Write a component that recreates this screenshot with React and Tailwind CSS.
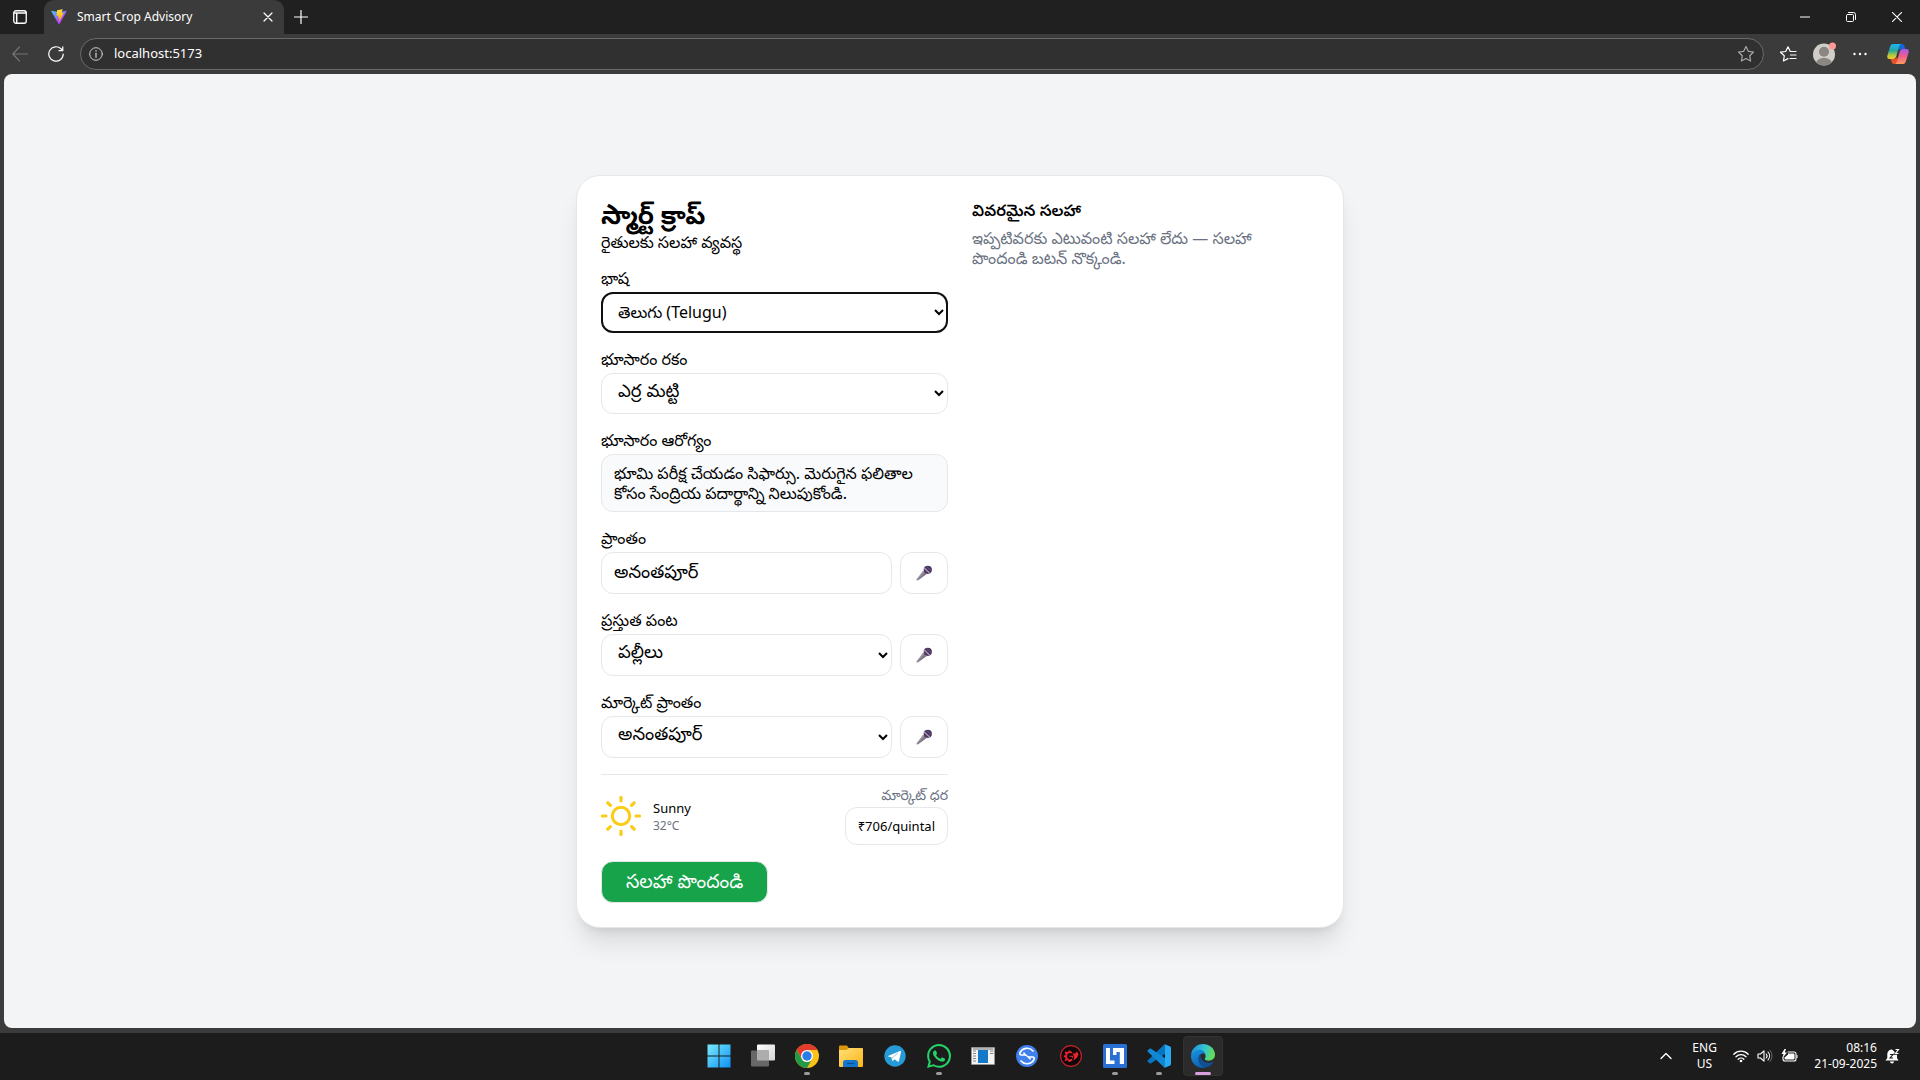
import React from "react";

const stroke = {
  fill: "none",
  stroke: "currentColor",
  strokeLinecap: "round",
  strokeLinejoin: "round",
};

/* ---------- Browser chrome ---------- */

function ViteLogo() {
  return (
    <svg viewBox="0 0 410 404" className="h-4 w-4 shrink-0" aria-hidden="true">
      <defs>
        <linearGradient id="viteA" x1="6" y1="33" x2="235" y2="344" gradientUnits="userSpaceOnUse">
          <stop stopColor="#41D1FF" />
          <stop offset="1" stopColor="#BD34FE" />
        </linearGradient>
        <linearGradient id="viteB" x1="194" y1="9" x2="236" y2="293" gradientUnits="userSpaceOnUse">
          <stop stopColor="#FFEA83" />
          <stop offset=".08" stopColor="#FFDD35" />
          <stop offset="1" stopColor="#FFA800" />
        </linearGradient>
      </defs>
      <path fill="url(#viteA)" d="M399.641 59.525 215.643 388.545c-3.799 6.793-13.559 6.834-17.415.073L10.582 59.556C6.38 52.19 12.68 43.266 21.028 44.759l184.195 32.923c1.175.21 2.378.208 3.553-.006l180.343-32.87c8.32-1.517 14.649 7.337 10.522 14.719Z" />
      <path fill="url(#viteB)" d="M292.965 1.574 156.801 28.255a5 5 0 0 0-4.03 4.611l-8.376 141.464c-.197 3.332 2.863 5.918 6.115 5.168l37.91-8.749c3.547-.818 6.752 2.306 6.023 5.873l-11.263 55.153c-.758 3.712 2.727 6.886 6.352 5.785l23.415-7.114c3.63-1.102 7.118 2.081 6.35 5.796l-17.899 86.633c-1.12 5.419 6.088 8.374 9.094 3.728l2.008-3.103 110.954-221.428c1.858-3.707-1.346-7.935-5.418-7.15l-39.022 7.532c-3.667.707-6.787-2.708-5.752-6.296l25.469-88.291c1.036-3.594-2.095-7.012-5.766-6.293Z" />
    </svg>
  );
}

function CopilotLogo() {
  return (
    <svg viewBox="0 0 24 24" className="h-6 w-6" aria-hidden="true">
      <defs>
        <linearGradient id="copA" x1="0" y1="0" x2="0" y2="1">
          <stop stopColor="#1bb8f2" />
          <stop offset=".45" stopColor="#2aa69a" />
          <stop offset=".75" stopColor="#b4c93c" />
          <stop offset="1" stopColor="#f7c92c" />
        </linearGradient>
        <linearGradient id="copB" x1="0" y1="0" x2="0" y2="1">
          <stop stopColor="#a05cf0" />
          <stop offset=".45" stopColor="#ee5a8e" />
          <stop offset="1" stopColor="#ff9a5a" />
        </linearGradient>
      </defs>
      <path fill="#1565dd" d="M13 2h2.800c1.300 0 2.200.8 2.600 2.100L19.300 7H15c-1.300 0-2 .8-2.400 2L12 6Z" />
      <path fill="url(#copA)" d="M7 2h8c-1.200.5-1.700 1.600-2.100 3l-2.700 9.500C9.700 16 8.900 17 7.200 17H3.500C1.500 17 .9 15.600 1.400 13.600L4 5C4.600 3 5.400 2 7 2Z" />
      <path fill="#e8502a" d="M11 22H8.200c-1.300 0-2.200-.8-2.600-2.100L4.700 17H8c1.800 0 2.600-1 3-2.300L12 18Z" />
      <path fill="url(#copB)" d="M17 22H9c1.200-.5 1.700-1.600 2.100-3l2.700-9.500C14.300 8 15.100 7 16.800 7h3.700c2 0 2.600 1.400 2.100 3.400L20 19c-.6 2-1.400 3-3 3Z" />
    </svg>
  );
}

function TitleBar() {
  return (
    <div className="flex h-[34px] items-stretch bg-[#202020] text-white">
      <button aria-label="Tab actions" className="flex w-11 items-center justify-center pr-1">
        <svg viewBox="0 0 14 14" className="h-3.5 w-3.5" aria-hidden="true">
          <rect x=".75" y=".75" width="12.5" height="12.5" rx="2.200" {...stroke} strokeWidth="1.300" />
          <path d="M1 3h12M3.700 4v9" {...stroke} strokeWidth="1.500" />
        </svg>
      </button>
      <div className="flex w-[240px] items-center rounded-t-[10px] bg-[#3b3b3b] pr-1 pl-[7px]">
        <ViteLogo />
        <span className="ml-2.5 flex-1 text-xs">Smart Crop Advisory</span>
        <button aria-label="Close tab" className="flex h-6 w-6 items-center justify-center">
          <svg viewBox="0 0 10 10" className="h-2.5 w-2.5" aria-hidden="true">
            <path d="m1 1 8 8M9 1 1 9" {...stroke} strokeWidth="1.200" />
          </svg>
        </button>
      </div>
      <button aria-label="New tab" className="flex w-[34px] items-center justify-center">
        <svg viewBox="0 0 14 14" className="h-3.5 w-3.5" aria-hidden="true">
          <path d="M7 .5v13M.5 7h13" {...stroke} strokeWidth="1.200" />
        </svg>
      </button>
      <div className="ml-auto flex">
        <button aria-label="Minimize" className="flex w-[46px] items-center justify-center">
          <svg viewBox="0 0 10 10" className="h-2.5 w-2.5" aria-hidden="true">
            <path d="M0 5h10" stroke="currentColor" />
          </svg>
        </button>
        <button aria-label="Restore" className="flex w-[46px] items-center justify-center">
          <svg viewBox="0 0 10 10" className="h-2.5 w-2.5" aria-hidden="true">
            <rect x=".5" y="2.500" width="7" height="7" rx="1" {...stroke} />
            <path d="M2.500.5h5a2 2 0 0 1 2 2v5" {...stroke} />
          </svg>
        </button>
        <button aria-label="Close" className="flex w-[46px] items-center justify-center">
          <svg viewBox="0 0 10 10" className="h-2.5 w-2.5" aria-hidden="true">
            <path d="m.3.3 9.400 9.400M9.700.3.300 9.700" {...stroke} strokeWidth="1.100" />
          </svg>
        </button>
      </div>
    </div>
  );
}

function Toolbar() {
  return (
    <div className="flex h-10 items-center bg-[#3b3b3b] pr-2.5 pl-2 text-white">
      <button aria-label="Back" className="flex w-6 justify-center text-[#757575]">
        <svg viewBox="0 0 16 16" className="h-4 w-4" aria-hidden="true">
          <path d="M7.500 1 .8 8l6.700 7M1 8h14.500" {...stroke} strokeWidth="1.100" />
        </svg>
      </button>
      <button aria-label="Refresh" className="ml-3 flex w-6 justify-center">
        <svg viewBox="0 0 16 16" className="h-4 w-4" aria-hidden="true">
          <path d="M15.200 8A7.200 7.200 0 1 1 13 2.800L14.800 4.500M14.800.8v3.800H11" {...stroke} strokeWidth="1.200" />
        </svg>
      </button>
      <div className="ml-3 flex h-8 flex-1 items-center rounded-full border border-[#6a6a6a] bg-[#303030] pr-2 pl-2">
        <svg viewBox="0 0 14 14" className="h-3.5 w-3.5 shrink-0 text-[#d0d0d0]" aria-hidden="true">
          <circle cx="7" cy="7" r="6.300" {...stroke} />
          <path d="M7 6.300v4" {...stroke} strokeWidth="1.200" />
          <circle cx="7" cy="4" r=".8" fill="currentColor" />
        </svg>
        <input
          aria-label="Address"
          defaultValue="localhost:5173"
          className="ml-[11px] min-w-0 flex-1 bg-transparent text-[13px] text-white outline-none"
        />
        <button aria-label="Add to favorites" className="text-[#a8a8a8]">
          <svg viewBox="0 0 18 18" className="h-[18px] w-[18px]" aria-hidden="true">
            <path d="m9 1.500 2.300 4.800 5.200.7-3.800 3.700.9 5.300L9 13.500 4.400 16l.9-5.300L1.500 7l5.200-.7Z" {...stroke} strokeWidth="1.200" />
          </svg>
        </button>
      </div>
      <div className="ml-3 flex items-center">
        <button aria-label="Favorites" className="flex w-6 justify-center">
          <svg viewBox="0 0 18 18" className="h-[18px] w-[18px]" aria-hidden="true">
            <path d="M17 6.500h-5.700L9 1.800 6.700 6.500l-5.200.7 3.800 3.600-.9 5.200L9 13.600M11.500 10H17M11 13.500h6" {...stroke} strokeWidth="1.200" />
          </svg>
        </button>
        <button aria-label="Profile" className="ml-3 flex w-6 justify-center">
          <svg viewBox="0 0 24 24" className="h-6 w-6" aria-hidden="true">
            <clipPath id="avatar"><circle cx="12" cy="12.500" r="11" /></clipPath>
            <g clipPath="url(#avatar)">
              <path fill="#d1cdc9" d="M0 0h24v24H0z" />
              <circle cx="12" cy="9.800" r="5" fill="#8b8682" />
              <ellipse cx="12" cy="21.500" rx="8" ry="5.800" fill="#8b8682" />
            </g>
            <circle cx="20.500" cy="4" r="3.500" fill="#ff9a94" />
          </svg>
        </button>
        <button aria-label="Settings and more" className="ml-3 flex w-6 justify-center">
          <svg viewBox="0 0 16 16" className="h-4 w-4" aria-hidden="true" fill="currentColor">
            <circle cx="2.500" cy="8" r="1.200" /><circle cx="8" cy="8" r="1.200" /><circle cx="13.500" cy="8" r="1.200" />
          </svg>
        </button>
        <button aria-label="Copilot" className="ml-3.5"><CopilotLogo /></button>
      </div>
    </div>
  );
}

/* ---------- Advisory form ---------- */

const field = "w-full min-w-0 rounded-xl border border-gray-200 bg-white px-3 text-black";

function Field({ id, label, children }) {
  return (
    <div className="mb-4">
      <label htmlFor={id} className="block h-5 text-base leading-5">{label}</label>
      <div className="mt-1 flex gap-2">{children}</div>
    </div>
  );
}

function MicButton({ label }) {
  return (
    <button type="button" aria-label={label} className="flex h-[42px] w-12 shrink-0 items-center justify-center rounded-xl border border-gray-200">
      <svg viewBox="0 0 16 16" className="h-4 w-4" aria-hidden="true">
        <path fill="#9d94a3" d="m7.200 5.500 3.500 3.400L2 15.200.7 15.400.4 14.500Z" />
        <path fill="#6d6475" d="m8.300 7 2.400 1.900L2 15.200l-.9.100Z" opacity=".6" />
        <circle cx="11.800" cy="4.800" r="4.100" fill="#4a3560" />
        <path d="m8 2.800 5.800 5.500" stroke="#a99cb8" strokeWidth="1.300" />
        <path d="M10.500 1.500 15 5.500" stroke="#75628a" strokeWidth=".8" />
      </svg>
    </button>
  );
}

function SunIcon() {
  return (
    <svg viewBox="0 0 40 40" className="h-10 w-10 text-[#facc15]" aria-hidden="true">
      <circle cx="20" cy="20" r="8.700" {...stroke} strokeWidth="3" />
      <path d="M20 1.500v3.500M20 35v3.500M1.500 20H5M35 20h3.500M6.800 6.800l2.600 2.600M30.600 30.600l2.600 2.600M6.800 33.200l2.600-2.600M30.600 9.400l2.600-2.600" {...stroke} strokeWidth="3.200" />
    </svg>
  );
}

function AdvisoryCard() {
  return (
    <section className="grid w-full max-w-3xl grid-cols-2 gap-6 rounded-3xl border border-gray-200 bg-white p-6 text-black shadow-xl">
      <form onSubmit={(e) => e.preventDefault()}>
        <h1 className="h-8 text-[26px] leading-7 font-bold">స్మార్ట్ క్రాప్</h1>
        <p className="mb-4 h-5 text-base leading-5">రైతులకు సలహా వ్యవస్థ</p>

        <Field id="language" label="భాష">
          <select id="language" className={`${field} h-[41px] text-base outline-2 -outline-offset-2 outline-[#101010]`}>
            <option>తెలుగు (Telugu)</option>
          </select>
        </Field>

        <Field id="soil" label="భూసారం రకం">
          <select id="soil" className={`${field} h-[41px] font-['Noto_Sans_Telugu','Noto_Sans',sans-serif] text-lg`}>
            <option>ఎర్ర మట్టి</option>
          </select>
        </Field>

        <div className="mb-4">
          <h2 className="h-5 text-base leading-5">భూసారం ఆరోగ్యం</h2>
          <p className="mt-1 rounded-xl border border-gray-200 bg-gray-50 px-3 py-2 text-base leading-5">
            భూమి పరీక్ష చేయడం సిఫార్సు. మెరుగైన ఫలితాల కోసం సేంద్రియ పదార్థాన్ని నిలుపుకోండి.
          </p>
        </div>

        <Field id="region" label="ప్రాంతం">
          <input id="region" defaultValue="అనంతపూర్" className={`${field} h-[42px] text-lg`} />
          <MicButton label="ప్రాంతం" />
        </Field>

        <Field id="crop" label="ప్రస్తుత పంట">
          <select id="crop" className={`${field} h-[42px] font-['Noto_Sans_Telugu','Noto_Sans',sans-serif] text-lg`}>
            <option>పల్లీలు</option>
          </select>
          <MicButton label="ప్రస్తుత పంట" />
        </Field>

        <Field id="market" label="మార్కెట్ ప్రాంతం">
          <select id="market" className={`${field} h-[42px] font-['Noto_Sans_Telugu','Noto_Sans',sans-serif] text-lg`}>
            <option>అనంతపూర్</option>
          </select>
          <MicButton label="మార్కెట్ ప్రాంతం" />
        </Field>

        <div className="flex items-center justify-between border-t border-gray-200 pt-3">
          <div className="flex items-center gap-3">
            <SunIcon />
            <div>
              <p className="text-[13px] leading-5">Sunny</p>
              <p className="text-xs text-gray-500">32°C</p>
            </div>
          </div>
          <div className="text-right">
            <p className="h-5 text-sm leading-4 text-gray-500">మార్కెట్ ధర</p>
            <p className="rounded-xl border border-gray-200 px-3 py-2 text-[13px] leading-5">₹706/quintal</p>
          </div>
        </div>

        <button type="submit" className="mt-4 h-[42px] rounded-xl border border-gray-200 bg-[#16a34a] px-6 text-[19px] text-white">
          సలహా పొందండి
        </button>
      </form>

      <div>
        <h2 className="mb-2 h-5 text-base leading-5 font-semibold">వివరమైన సలహా</h2>
        <p className="pr-10 text-base leading-5 text-gray-500">
          ఇప్పటివరకు ఎటువంటి సలహా లేదు — సలహా పొందండి బటన్ నొక్కండి.
        </p>
      </div>
    </section>
  );
}

/* ---------- Taskbar ---------- */

const I = ({ children }) => (
  <svg viewBox="0 0 24 24" className="h-6 w-6" aria-hidden="true">{children}</svg>
);

const apps = [
  {
    name: "Start",
    icon: (
      <I>
        <linearGradient id="win" x1="0" y1="0" x2="24" y2="24" gradientUnits="userSpaceOnUse">
          <stop stopColor="#7cecfb" /><stop offset="1" stopColor="#0a90f5" />
        </linearGradient>
        <path fill="url(#win)" d="M.5.5h11v11H.5zM12.500.5h11v11h-11zM.5 12.500h11v11H.5zM12.500 12.500h11v11h-11z" />
      </I>
    ),
  },
  {
    name: "Task view",
    icon: (
      <I>
        <linearGradient id="tv" x1="0" y1="0" x2="1" y2="1"><stop stopColor="#fff" /><stop offset="1" stopColor="#d4d4d4" /></linearGradient>
        <rect x="6" y=".5" width="18" height="16" rx="1" fill="url(#tv)" />
        <rect x="0" y="6.500" width="18" height="16" rx="1" fill="#686868" />
        <path fill="#adadad" d="M6 6.500h11a1 1 0 0 1 1 1v9H6z" />
      </I>
    ),
  },
  {
    name: "Chrome",
    running: true,
    icon: (
      <I>
        <circle cx="12" cy="12" r="12" fill="#fbc116" />
        <path fill="#e33b2e" d="M1.600 6A12 12 0 0 1 22.400 6H12L6.800 15Z" />
        <path fill="#249a46" d="M1.600 6 6.800 15a6 6 0 0 0 10.400 0L12 24A12 12 0 0 1 1.600 6Z" />
        <circle cx="12" cy="12" r="6" fill="#fff" />
        <circle cx="12" cy="12" r="4.700" fill="#2a7de9" />
      </I>
    ),
  },
  {
    name: "File Explorer",
    icon: (
      <I>
        <linearGradient id="fe" x1="0" y1="0" x2="1" y2="1"><stop stopColor="#ffe07a" /><stop offset="1" stopColor="#fbb416" /></linearGradient>
        <path fill="#dc9708" d="M0 2.500A1 1 0 0 1 1 1.500h7l2 3v4H0Z" />
        <path fill="url(#fe)" d="M0 6h7.500l2.500-2h13a1 1 0 0 1 1 1v17a1 1 0 0 1-1 1H1a1 1 0 0 1-1-1Z" />
        <path fill="#1477cc" d="M4 23v-4.500A2.500 2.500 0 0 1 6.500 16h10a2.500 2.500 0 0 1 2.500 2.500V23Z" />
        <path stroke="#0b4f91" strokeWidth="1.200" d="M8 19.500h7.500" />
      </I>
    ),
  },
  {
    name: "Telegram",
    icon: (
      <I>
        <circle cx="12" cy="12" r="10.700" fill="#279bd8" />
        <path fill="#fff" d="m5 12 12-5c.8-.3 1.200.1 1 1l-2 9c-.2.9-.7 1-1.400.5l-3-2.200-1.500 1.500c-.4.4-.8.3-.9-.3l-.8-3.200-3-.9c-.6-.2-.6-.3 0-.4Z" />
        <path stroke="#9dcbe8" strokeWidth="1" d="m9 14 6-5" />
      </I>
    ),
  },
  {
    name: "WhatsApp",
    running: true,
    icon: (
      <I>
        <path fill="#25d366" d="M17.472 14.382c-.297-.149-1.758-.867-2.030-.967-.273-.099-.471-.148-.67.150-.197.297-.767.966-.940 1.164-.173.199-.347.223-.644.075-.297-.150-1.255-.463-2.390-1.475-.883-.788-1.480-1.761-1.653-2.059-.173-.297-.018-.458.130-.606.134-.133.298-.347.446-.520.149-.174.198-.298.298-.497.099-.198.050-.371-.025-.520-.075-.149-.669-1.612-.916-2.207-.242-.579-.487-.500-.669-.510-.173-.008-.371-.010-.570-.010-.198 0-.520.074-.792.372-.272.297-1.040 1.016-1.040 2.479 0 1.462 1.065 2.875 1.213 3.074.149.198 2.096 3.200 5.077 4.487.709.306 1.262.489 1.694.625.712.227 1.360.195 1.871.118.571-.085 1.758-.719 2.006-1.413.248-.694.248-1.289.173-1.413-.074-.124-.272-.198-.570-.347M12.050 21.785h-.004a9.870 9.870 0 0 1-5.031-1.378l-.361-.214-3.741.982.998-3.648-.235-.374a9.860 9.860 0 0 1-1.510-5.260C2.167 6.443 6.602 2.009 12.054 2.009a9.825 9.825 0 0 1 6.988 2.898 9.825 9.825 0 0 1 2.893 6.994c-.003 5.450-4.437 9.884-9.885 9.884M20.463 3.488A11.815 11.815 0 0 0 12.050 0C5.495 0 .160 5.335.157 11.892c0 2.096.547 4.142 1.588 5.945L.057 24l6.305-1.654a11.882 11.882 0 0 0 5.683 1.448h.005c6.554 0 11.890-5.335 11.893-11.893a11.821 11.821 0 0 0-3.480-8.413Z" />
      </I>
    ),
  },
  {
    name: "Document viewer",
    icon: (
      <I>
        <path fill="#f3f3f3" stroke="#9a9a9a" strokeWidth=".7" d="M.5 3.500h23v17H.5z" />
        <path fill="#e3e3e3" d="M1 4h22v2H1z" />
        <path fill="#1379c8" d="M7 6h10v13H7z" />
        <path stroke="#777" strokeWidth=".9" d="M2 7h3M2 9.500h3M2 12h3M2 14.500h3M2 17h3M19 7h3.500M19 9.500h3.500M2 5h20" />
      </I>
    ),
  },
  {
    name: "Share",
    icon: (
      <I>
        <circle cx="12" cy="12" r="11" fill="#3f80ec" />
        <path d="M18 7A7.800 7.800 0 0 0 5 8.700C4.500 10 5 11 6.500 11h4l-1.500-1.800M6 17A7.800 7.800 0 0 0 19 15.300C19.500 14 19 13 17.500 13h-4l1.500 1.800" {...stroke} stroke="#fff" strokeWidth="1.700" />
        <path d="m10.500 11 3 2" {...stroke} stroke="#fff" strokeWidth="1.500" />
      </I>
    ),
  },
  {
    name: "Gaming Center",
    icon: (
      <I>
        <circle cx="12" cy="12" r="10.400" fill="#100808" stroke="#c42128" strokeWidth="1.200" />
        <path d="M13 8.800a4 4 0 1 0 .3 6.700" fill="none" stroke="#ee242c" strokeWidth="1.700" />
        <path d="M10.500 6.500v2M10.500 16v2M4.800 12.300h2M6.200 8l1.500 1.500M6.200 16.600l1.500-1.500" stroke="#ee242c" strokeWidth="1.800" />
        <path fill="#ee242c" d="m13.500 9 2.300.8L18 7.500l1.500 3-1.300 3-3.700 3 .7-3.500Z" />
        <path d="M10.500 12.300h3v1.500" fill="none" stroke="#ee242c" strokeWidth="1.100" />
      </I>
    ),
  },
  {
    name: "LT",
    running: true,
    icon: (
      <I>
        <rect width="24" height="24" rx="1.500" fill="#2970d4" />
        <path fill="#fff" d="M3 4h4v12.500h4.500V20H3ZM12.500 4H21v16h-4.200V8h-4.300Z" />
        <path fill="#fff" d="M10 4h3.500v7H10Z" />
      </I>
    ),
  },
  {
    name: "Visual Studio Code",
    running: true,
    icon: (
      <I>
        <path fill="#0874bf" d="M17.500.3 23 2.900v3.500L4.200 19.300a1.300 1.300 0 0 1-1.700-.1L.8 17.700a1 1 0 0 1 0-1.500Z" />
        <path fill="#1088d6" d="M17.500 23.700 23 21.100v-3.500L4.200 4.700a1.300 1.300 0 0 0-1.700.1L.8 6.300a1 1 0 0 0 0 1.500Z" />
        <path fill="#27aaf0" d="M17.500 23.800c.8-.6.500-1.300.5-2V2.300c0-.8.2-1.500-.5-2.100L23.200 2.600a1.300 1.300 0 0 1 .8 1.300v16.200c0 .6-.3 1.100-.8 1.300Z" />
      </I>
    ),
  },
  {
    name: "Microsoft Edge",
    active: true,
    icon: (
      <I>
        <defs>
          <linearGradient id="edA" x1="1" y1="5" x2="23" y2="12" gradientUnits="userSpaceOnUse">
            <stop stopColor="#2195dc" /><stop offset=".5" stopColor="#31c5d4" /><stop offset="1" stopColor="#69df4c" />
          </linearGradient>
          <linearGradient id="edB" x1="0" y1="7" x2="10" y2="24" gradientUnits="userSpaceOnUse">
            <stop stopColor="#1a94e0" /><stop offset="1" stopColor="#0b5cae" />
          </linearGradient>
        </defs>
        <path fill="url(#edA)" d="M0 11C.7 4.700 5.600 0 12 0c7 0 12 5.200 12 10.600 0 4-3 6.200-6.300 6.200-2.600 0-4-.9-4-1.700 0-.6.900-1 .9-3 0-2.600-2.500-4.600-5.800-4.600C4.500 7.500 1 9 0 11Z" />
        <path fill="url(#edB)" d="M0 12c.3-3.500 3.700-6.500 8-6.500 3.600 0 6.600 2.500 6.600 5.500-.8-1.200-2-1.600-3.200-1.400C9 10 7.600 12.300 7.600 15c0 4 3.500 7.700 7.600 8.500-1 .4-2 .5-3.200.5C5.200 24 0 18.700 0 12Z" />
        <path fill="#104f91" d="M11.400 9.600C9 10 7.600 12.300 7.600 15c0 5 4.500 8.900 8.900 8.100 2.500-.7 4.500-2.400 5.700-4.600.2-.5-.2-.8-.6-.6-1.100.6-2.300.8-3.600.8-5 0-8.600-3.700-8.400-6.500.1-1.100.7-2.100 1.800-2.600Z" />
      </I>
    ),
  },
];

function TaskButton({ app }) {
  return (
    <button
      aria-label={app.name}
      className={
        app.active
          ? "relative flex h-10 w-10 items-center justify-center rounded border border-[#333] bg-[#2b2b2b]"
          : "relative flex h-10 w-10 items-center justify-center"
      }
    >
      {app.icon}
      {app.running && <span className="absolute bottom-px h-[3px] w-1.5 rounded-full bg-[#9a9a9a]" />}
      {app.active && <span className="absolute bottom-0 h-[3px] w-4 rounded-full bg-[#d9a0df]" />}
    </button>
  );
}

function Taskbar() {
  return (
    <footer className="grid h-[47px] grid-cols-[1fr_auto_1fr] items-center bg-[#1c1c1c] pb-px text-white">
      <nav aria-label="Taskbar" className="col-start-2 flex gap-1 pl-px">
        {apps.map((app) => <TaskButton key={app.name} app={app} />)}
      </nav>
      <div className="flex items-center justify-end pr-5 text-xs leading-4">
        <button aria-label="Show hidden icons">
          <svg viewBox="0 0 12 12" className="h-3 w-3" aria-hidden="true">
            <path d="m1 8.500 5-5 5 5" {...stroke} strokeWidth="1.400" />
          </svg>
        </button>
        <button className="ml-5 w-6 text-center">ENG<br />US</button>
        <button aria-label="Network, volume and battery" className="ml-[17px] flex items-center gap-2">
          <svg viewBox="0 0 16 14" className="h-3.5 w-4" aria-hidden="true">
            <path d="M.8 5.200a10 10 0 0 1 14.400 0M3 7.700a7 7 0 0 1 10 0M5.200 10.200a4 4 0 0 1 5.600 0" {...stroke} strokeWidth="1.300" />
            <circle cx="8" cy="12" r="1.300" fill="currentColor" />
          </svg>
          <svg viewBox="0 0 16 14" className="h-3.5 w-4" aria-hidden="true">
            <path d="M1 5h2.500L7 1.800v10.400L3.500 9H1ZM9.200 5a3 3 0 0 1 0 4M11 3a6 6 0 0 1 0 8" {...stroke} strokeWidth="1.100" />
            <path d="M13 1.300a8.500 8.500 0 0 1 0 11.400" {...stroke} stroke="#666" />
          </svg>
          <svg viewBox="0 0 17 14" className="h-3.5 w-[17px]" aria-hidden="true">
            <path d="M7 3h6a2 2 0 0 1 2 2v5a2 2 0 0 1-2 2H4a2 2 0 0 1-2-2V8" {...stroke} strokeWidth="1.100" />
            <path fill="currentColor" d="M7 4.500h5.500a1 1 0 0 1 1 1v4a1 1 0 0 1-1 1H4.500a1 1 0 0 1-1-1V8.500L7 5.500ZM15.500 6h1v3h-1ZM3.500 0 .5 5h2L1.500 9 6 3.500H3.800L5 0Z" />
          </svg>
        </button>
        <button className="ml-4 text-right">08:16<br />21-09-2025</button>
        <button aria-label="Notifications" className="ml-2">
          <svg viewBox="0 0 15 16" className="h-4 w-[15px]" aria-hidden="true">
            <path fill="currentColor" d="M7 1.500c-3 0-4.700 2.200-4.700 5V10L.5 12.500h13L12 10V6ZM5 13.500h4a2 2 0 0 1-4 0Z" />
            <path d="M5 6.500h3l-3 3.500h3" fill="none" stroke="#1c1c1c" strokeWidth="1.100" />
            <path d="M10.500 1.500h3l-3 4h3" fill="none" stroke="#1c1c1c" strokeWidth="2.600" />
            <path d="M10.500 1.500h3l-3 4h3" fill="none" stroke="currentColor" strokeWidth="1.200" />
          </svg>
        </button>
      </div>
    </footer>
  );
}

export default function App() {
  return (
    <div className="flex min-h-screen flex-col bg-[#3b3b3b] font-['Segoe_UI','Noto_Sans','Nirmala_UI','Noto_Sans_Telugu',sans-serif]">
      <header>
        <TitleBar />
        <Toolbar />
      </header>
      <main className="mx-1 mb-[5px] flex flex-1 items-center justify-center rounded-lg bg-gray-100 p-6">
        <AdvisoryCard />
      </main>
      <Taskbar />
    </div>
  );
}
